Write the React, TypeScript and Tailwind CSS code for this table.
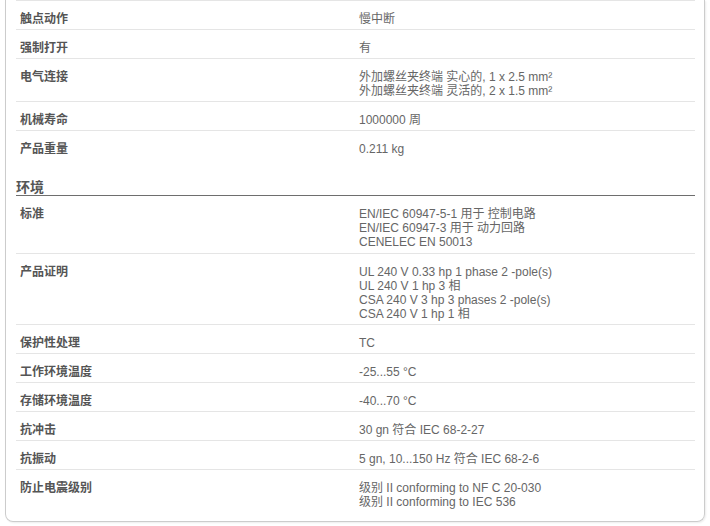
import React from "react";

type Row = { label: string; values: string[] };

const top: Row[] = [
  { label: "触点动作", values: ["慢中断"] },
  { label: "强制打开", values: ["有"] },
  { label: "电气连接", values: ["外加螺丝夹终端 实心的, 1 x 2.5 mm²", "外加螺丝夹终端 灵活的, 2 x 1.5 mm²"] },
  { label: "机械寿命", values: ["1000000 周"] },
  { label: "产品重量", values: ["0.211 kg"] },
];

const env: Row[] = [
  { label: "标准", values: ["EN/IEC 60947-5-1 用于 控制电路", "EN/IEC 60947-3 用于 动力回路", "CENELEC EN 50013"] },
  {
    label: "产品证明",
    values: [
      "UL 240 V 0.33 hp 1 phase 2 -pole(s)",
      "UL 240 V 1 hp 3 相",
      "CSA 240 V 3 hp 3 phases 2 -pole(s)",
      "CSA 240 V 1 hp 1 相",
    ],
  },
  { label: "保护性处理", values: ["TC"] },
  { label: "工作环境温度", values: ["-25...55 °C"] },
  { label: "存储环境温度", values: ["-40...70 °C"] },
  { label: "抗冲击", values: ["30 gn 符合 IEC 68-2-27"] },
  { label: "抗振动", values: ["5 gn, 10...150 Hz 符合 IEC 68-2-6"] },
  { label: "防止电震级别", values: ["级别 II conforming to NF C 20-030", "级别 II conforming to IEC 536"] },
];

const font = { fontFamily: '"Liberation Sans", Arial, "Noto Sans CJK SC", sans-serif' };

function SpecRow({ row, first, extraBottom }: { row: Row; first?: boolean; extraBottom?: boolean }) {
  return (
    <div
      className={`grid grid-cols-[343px_1fr] pt-[11px] ${extraBottom ? "pb-[4px]" : "pb-[3px]"} ${
        first ? "" : "border-t border-[#e5e5e5]"
      }`}
    >
      <div className="pl-[4px] text-[12px] leading-[14px] font-bold text-[#555555]">{row.label}</div>
      <div className="text-[12px] leading-[14px] text-[#666666]">
        {row.values.map((v, i) => (
          <div key={i}>{v}</div>
        ))}
      </div>
    </div>
  );
}

export default function App() {
  return (
    <div className="bg-white w-[710px] h-[526px] overflow-hidden" style={font}>
      <div className="ml-[5px] w-[700px] pl-[10px] pr-[9px] pb-[9px] border-l border-r border-b border-[#cccccc] rounded-b-[8px] shadow-[1px_1px_2px_rgba(0,0,0,0.08)]">
        <div className="border-t border-[#e5e5e5]">
          {top.map((r, i) => (
            <SpecRow key={r.label} row={r} first={i === 0} />
          ))}
        </div>
        <div className="mt-[20px] text-[14px] leading-[16px] font-bold text-[#555555] border-b border-[#6e6e6e]">
          环境
        </div>
        <div>
          {env.map((r, i) => (
            <SpecRow key={r.label} row={r} first={i === 0} extraBottom={i === 0} />
          ))}
        </div>
      </div>
    </div>
  );
}
